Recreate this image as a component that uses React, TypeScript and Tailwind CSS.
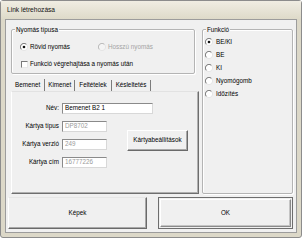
import React from "react";

function Radio({ checked = false, disabled = false }: { checked?: boolean; disabled?: boolean }) {
  return (
    <svg width="8" height="8" viewBox="0 0 8 8" className="shrink-0">
      <circle cx="4" cy="4" r="3.5" fill={disabled ? "#f4f4f4" : "#ffffff"} />
      <path d="M1.4 6.6 A3.5 3.5 0 0 1 6.6 1.4" stroke={disabled ? "#b4b4b4" : "#6e6e6e"} strokeWidth="1" fill="none" />
      <path d="M6.6 1.4 A3.5 3.5 0 0 1 1.4 6.6" stroke="#e4e4e4" strokeWidth="1" fill="none" />
      {checked && <circle cx="4" cy="4" r="1.3" fill="#111" />}
    </svg>
  );
}

function Check() {
  return <div className="w-[7px] h-[7px] shrink-0 bg-white border-l border-t border-l-[#7a7a7a] border-t-[#7a7a7a] border-r border-b border-r-[#e8e8e8] border-b-[#e8e8e8]" />;
}

function GroupBox({ label, className, children }: { label: string; className: string; children?: React.ReactNode }) {
  return (
    <div className={"relative border border-[#b4b4b4] rounded-[2px] shadow-[inset_1px_1px_0_#ffffff,1px_1px_0_#ffffff] " + className}>
      <span className="absolute -top-[4px] left-[3px] bg-[#f0f0f0] px-[1px] leading-[7px]">{label}</span>
      {children}
    </div>
  );
}

function Field({ label, value, wide = false, disabled = false }: { label: string; value: string; wide?: boolean; disabled?: boolean }) {
  return (
    <div className="flex items-center h-[11px]">
      <div className="w-[47px] text-right shrink-0">{label}</div>
      <div
        className={
          "ml-[3px] h-[11px] flex items-center pl-[2px] bg-white border border-t-[#8a8a8a] border-l-[#8a8a8a] border-r-[#d8d8d8] border-b-[#d8d8d8] " +
          (wide ? "w-[91px]" : "w-[45px]") +
          (disabled ? " text-[#9a9a9a]" : " text-black")
        }
      >
        {value}
      </div>
    </div>
  );
}

export default function App() {
  return (
    <div className="w-[304px] h-[240px] bg-white font-['Liberation_Sans',Arial,sans-serif] text-[6.3px] leading-none text-black">
      <div className="w-[302px] h-[238px] border border-[#8c8c8c] rounded-[3px] bg-[#dcd8c8] flex flex-col">
        <div className="h-[18px] shrink-0 flex items-center pl-[6px] bg-gradient-to-b from-[#f0ede3] to-[#dedac9] text-[6.6px] text-[#111]">
          Link létrehozása
        </div>
        <div className="ml-[4px] w-[292px] h-[214px] border border-[#9c9c9c] bg-[#f0f0f0] flex flex-col">
          <div className="mt-[9px] pl-[5px] flex h-[165px]">
            <div className="w-[188px] flex flex-col">
              <GroupBox label="Nyomás típusa" className="w-[184px] h-[45px]">
                <div className="pt-[13px] pl-[8px] flex flex-col gap-[9px]">
                  <div className="flex items-center h-[8px]">
                    <div className="w-[78px] flex items-center gap-[2px]">
                      <Radio checked />
                      <span>Rövid nyomás</span>
                    </div>
                    <div className="flex items-center gap-[2px] text-[#a4a4a4]">
                      <Radio disabled />
                      <span>Hosszú nyomás</span>
                    </div>
                  </div>
                  <div className="flex items-center h-[8px] gap-[2px] pl-[1px]">
                    <Check />
                    <span>Funkció végrehajtása a nyomás után</span>
                  </div>
                </div>
              </GroupBox>
              <div className="mt-[5px] flex items-end h-[12px]">
                <div className="h-[12px] px-[4px] flex items-center border-r border-[#7c7c7c]">Bemenet</div>
                <div className="h-[11px] px-[3px] flex items-center border-r border-[#7c7c7c]">Kimenet</div>
                <div className="h-[11px] px-[4px] flex items-center border-r border-[#7c7c7c]">Feltételek</div>
                <div className="h-[11px] px-[4px] flex items-center border-r border-[#7c7c7c]">Késleltetés</div>
              </div>
              <div className="h-[103px] w-[188px] border border-l-white border-t-[#e2e2e2] border-r-[#6e6e6e] border-b-[#6e6e6e] shadow-[inset_-1px_-1px_0_#b0b0b0] pt-[11px] flex flex-col gap-[7px]">
                <Field label="Név:" value="Bemenet B2 1" wide />
                <div className="flex items-start">
                  <div className="flex flex-col gap-[7px]">
                    <Field label="Kártya típus" value="DP8702" disabled />
                    <Field label="Kártya verzió" value="249" disabled />
                    <Field label="Kártya cím" value="16777226" disabled />
                  </div>
                  <div className="ml-[20px] mt-[9px] w-[61px] h-[21px] flex items-center justify-center bg-[#f0f0f0] border border-l-white border-t-white border-r-[#6a6a6a] border-b-[#6a6a6a] shadow-[inset_-1px_-1px_0_#a8a8a8]">
                    Kártyabeállítások
                  </div>
                </div>
              </div>
            </div>
            <GroupBox label="Funkció" className="ml-[3px] w-[91px] h-[165px]">
              <div className="pt-[8px] pl-[2px] flex flex-col gap-[5px]">
                {["BE/KI", "BE", "KI", "Nyomógomb", "Időzítés"].map((t, i) => (
                  <div key={t} className="flex items-center h-[8px] gap-[3px]">
                    <Radio checked={i === 0} />
                    <span>{t}</span>
                  </div>
                ))}
              </div>
            </GroupBox>
          </div>
          <div className="mt-[3px] pl-[2px] flex h-[32px]">
            <div className="w-[139px] h-[32px] flex items-center justify-center bg-[#f0f0f0] border border-l-white border-t-[#e6e6e6] border-r-[#6a6a6a] border-b-[#6a6a6a] shadow-[inset_-1px_-1px_0_#a8a8a8]">
              Képek
            </div>
            <div className="ml-[11px] w-[135px] h-[32px] border border-[#6e6e6e] p-[1px]">
              <div className="w-full h-full flex items-center justify-center border border-l-white border-t-white border-r-[#8a8a8a] border-b-[#8a8a8a] shadow-[inset_-1px_-1px_0_#c4c4c4]">
                OK
              </div>
            </div>
          </div>
        </div>
      </div>
    </div>
  );
}
